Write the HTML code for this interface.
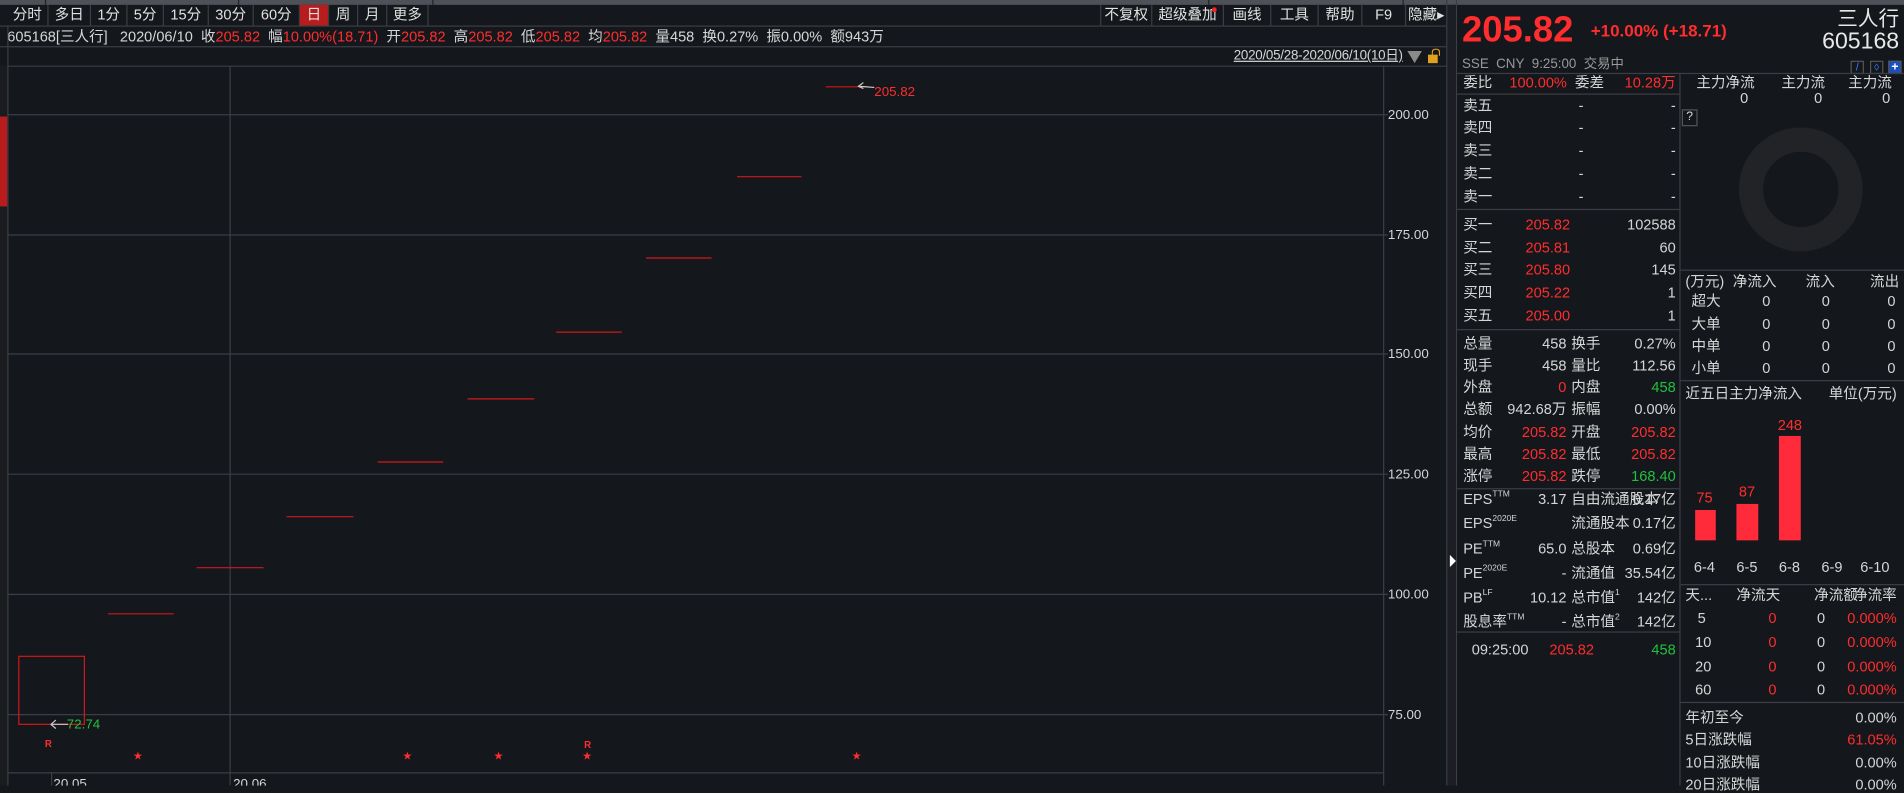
<!DOCTYPE html>
<html><head><meta charset="utf-8"><style>
html,body{margin:0;padding:0;background:#14171c;overflow:hidden;width:1904px;height:786px}
#w{position:absolute;left:0;top:0;width:1568px;height:647px;transform:scale(1.214286);transform-origin:0 0;background:#14171c;font-family:"Liberation Sans","Noto Sans CJK SC",sans-serif;font-size:12px;color:#d6d6d6}
.t{position:absolute;white-space:nowrap;line-height:14px}
.r{color:#ff2d2d}.g{color:#22c040}.gr{color:#9a9a9a}
.hl{position:absolute;height:1px;background:#3b3e44}
.vl{position:absolute;width:1px;background:#3b3e44}
.btn{position:absolute;top:4px;height:17px;line-height:17px;text-align:center;border-right:1px solid #3b3e44;font-size:12px;color:#e0e0e0}
sup{font-size:7px;vertical-align:top;line-height:8px}
</style></head><body><div id="w">
<div style="position:absolute;left:0;top:0;width:1568px;height:4px;background:#4e5157"></div>
<div style="position:absolute;left:37px;top:0;width:1px;height:4px;background:#222"></div>
<div style="position:absolute;left:196px;top:0;width:1px;height:4px;background:#222"></div>
<div style="position:absolute;left:356px;top:0;width:1px;height:4px;background:#222"></div>
<div style="position:absolute;left:995px;top:0;width:1px;height:4px;background:#222"></div>
<div style="position:absolute;left:1155px;top:0;width:1px;height:4px;background:#222"></div>
<div class="btn" style="left:6px;width:33px">分时</div>
<div class="btn" style="left:40px;width:34px">多日</div>
<div class="btn" style="left:75px;width:29px">1分</div>
<div class="btn" style="left:105px;width:29px">5分</div>
<div class="btn" style="left:135px;width:36px">15分</div>
<div class="btn" style="left:172px;width:36px">30分</div>
<div class="btn" style="left:209px;width:37px">60分</div>
<div class="btn" style="left:247px;width:23px;background:#b81c1c">日</div>
<div class="btn" style="left:271px;width:23px">周</div>
<div class="btn" style="left:295px;width:23px">月</div>
<div class="btn" style="left:319px;width:33px">更多</div>
<div class="vl" style="left:906px;top:4px;height:17px"></div>
<div class="btn" style="left:907px;width:41px">不复权</div>
<div class="btn" style="left:949px;width:58px">超级叠加</div>
<div style="position:absolute;left:998px;top:6px;width:4px;height:4px;border-radius:2px;background:#f22"></div>
<div class="btn" style="left:1008px;width:38px">画线</div>
<div class="btn" style="left:1047px;width:38px">工具</div>
<div class="btn" style="left:1086px;width:35px">帮助</div>
<div class="btn" style="left:1122px;width:35px">F9</div>
<div class="btn" style="left:1158px;width:33px;border:none">隐藏▸</div>
<div class="hl" style="left:0;top:21px;width:1191px"></div>
<div class="t" style="left:6px;top:23px">605168[三人行]&nbsp;&nbsp; 2020/06/10&nbsp; 收<span class="r">205.82</span>&nbsp; 幅<span class="r">10.00%(18.71)</span>&nbsp; 开<span class="r">205.82</span>&nbsp; 高<span class="r">205.82</span>&nbsp; 低<span class="r">205.82</span>&nbsp; 均<span class="r">205.82</span>&nbsp; 量458&nbsp; 换0.27%&nbsp; 振0.00%&nbsp; 额943万</div>
<div class="hl" style="left:0;top:38px;width:1191px"></div>
<div class="t" style="left:1016px;top:39px;text-decoration:underline;font-size:11px;letter-spacing:-0.2px">2020/05/28-2020/06/10(10日)</div>
<div style="position:absolute;left:1159px;top:42px;width:0;height:0;border-left:6px solid transparent;border-right:6px solid transparent;border-top:10px solid #8a8a8a"></div>
<div style="position:absolute;left:1176px;top:45px;width:8px;height:7px;background:#e0a020"></div>
<div style="position:absolute;left:1179px;top:40px;width:5px;height:5px;border:1px solid #e0a020;border-bottom:none;border-radius:3px 3px 0 0"></div>
<div style="position:absolute;left:0;top:54px;width:6px;height:593px;background:#1a1c20"></div>
<div style="position:absolute;left:0;top:96px;width:6px;height:74px;background:#b81c1c"></div>
<div class="vl" style="left:6px;top:21px;height:626px"></div>
<svg style="position:absolute;left:0;top:0" width="1200" height="647">
<g stroke="#3b3e44" stroke-width="1">
<line x1="7" y1="54.5" x2="1191" y2="54.5"/>
<line x1="7" y1="94.5" x2="1143" y2="94.5"/>
<line x1="7" y1="193.5" x2="1143" y2="193.5"/>
<line x1="7" y1="291.5" x2="1143" y2="291.5"/>
<line x1="7" y1="390.5" x2="1143" y2="390.5"/>
<line x1="7" y1="489.5" x2="1143" y2="489.5"/>
<line x1="7" y1="588.5" x2="1143" y2="588.5"/>
<line x1="7" y1="636.5" x2="1139" y2="636.5"/>
<line x1="189.5" y1="54" x2="189.5" y2="647"/>
<line x1="42.5" y1="636" x2="42.5" y2="647"/>
<line x1="1139.5" y1="54" x2="1139.5" y2="647"/>
<line x1="1191.5" y1="0" x2="1191.5" y2="647"/>
<line x1="1199.5" y1="0" x2="1199.5" y2="647"/>
</g>
<rect x="1192" y="4" width="7" height="643" fill="#1c1e23"/>
<polygon points="1194,457 1194,467 1199,462" fill="#fff"/>
<g stroke="#d01818" stroke-width="1">
<line x1="680" y1="71.5" x2="715" y2="71.5"/>
<line x1="607" y1="145.5" x2="660" y2="145.5"/>
<line x1="532" y1="212.5" x2="586" y2="212.5"/>
<line x1="458" y1="273.5" x2="512" y2="273.5"/>
<line x1="385" y1="328.5" x2="440" y2="328.5"/>
<line x1="311" y1="380.5" x2="365" y2="380.5"/>
<line x1="236" y1="425.5" x2="291" y2="425.5"/>
<line x1="162" y1="467.5" x2="217" y2="467.5"/>
<line x1="89" y1="505.5" x2="143" y2="505.5"/>
<rect x="15.5" y="540.5" width="54" height="56" fill="none"/>
</g>
<g stroke="#ccc" stroke-width="1" fill="none">
<line x1="707" y1="71" x2="720" y2="72"/><polyline points="711,68 707,71 711,73"/>
<line x1="42" y1="596.5" x2="56" y2="596.5"/><polyline points="46,593 42,596.5 46,600"/>
</g>
<text x="720" y="79" fill="#ff2d2d" font-size="11" font-family="Liberation Sans">205.82</text>
<text x="55" y="600" fill="#22c040" font-size="11" font-family="Liberation Sans">72.74</text>
<g fill="#ff2d2d" font-size="8" font-family="Liberation Sans" font-weight="bold">
<text x="37" y="615">R</text><text x="481" y="616">R</text>
<text x="110" y="625">★</text><text x="332" y="625">★</text><text x="407" y="625">★</text><text x="480" y="625">★</text><text x="702" y="625">★</text>
</g>
<g fill="#d6d6d6" font-size="11" font-family="Liberation Sans">
<text x="1143" y="98">200.00</text><text x="1143" y="197">175.00</text><text x="1143" y="295">150.00</text>
<text x="1143" y="394">125.00</text><text x="1143" y="493">100.00</text><text x="1143" y="592">75.00</text>
<text x="44" y="649">20.05</text><text x="192" y="649">20.06</text>
</g>
</svg>
<div class="t r" style="left:1204px;top:9px;font-size:30px;line-height:32px;font-weight:bold">205.82</div>
<div class="t r" style="left:1310px;top:18px;font-size:14px;font-weight:bold">+10.00% (+18.71)</div>
<div class="t" style="right:4px;top:6px;font-size:17px;line-height:20px;color:#e8e8e8">三人行</div>
<div class="t" style="right:4px;top:24px;font-size:19px;line-height:22px;color:#e8e8e8">605168</div>
<div class="t gr" style="left:1204px;top:46px;font-size:11px">SSE&nbsp; CNY&nbsp; 9:25:00&nbsp; 交易中</div>
<div style="position:absolute;left:1524px;top:50px;width:9px;height:9px;border:1px solid #555;color:#3a7fff;font-size:9px;line-height:9px;text-align:center">/</div>
<div style="position:absolute;left:1540px;top:50px;width:9px;height:9px;border:1px solid #555;color:#3a7fff;font-size:8px;line-height:9px;text-align:center">◊</div>
<div style="position:absolute;left:1555px;top:50px;width:9px;height:9px;border:1px solid #555;background:#1b4fc0;color:#fff;font-size:10px;line-height:9px;text-align:center;font-weight:bold">+</div>
<div class="hl" style="left:1200px;top:60px;width:368px"></div>
<div class="vl" style="left:1383px;top:60px;height:587px"></div>
<div class="t" style="left:1205px;top:61px">委比</div><div class="t r" style="left:1243px;top:61px">100.00%</div><div class="t" style="left:1297px;top:61px">委差</div><div class="t r" style="right:188px;top:61px">10.28万</div>
<div class="hl" style="left:1200px;top:77px;width:183px"></div>
<div class="t" style="left:1205px;top:80px">卖五</div><div class="t" style="left:1300px;top:80px">-</div><div class="t" style="left:1376px;top:80px">-</div>
<div class="t" style="left:1205px;top:98px">卖四</div><div class="t" style="left:1300px;top:98px">-</div><div class="t" style="left:1376px;top:98px">-</div>
<div class="t" style="left:1205px;top:117px">卖三</div><div class="t" style="left:1300px;top:117px">-</div><div class="t" style="left:1376px;top:117px">-</div>
<div class="t" style="left:1205px;top:136px">卖二</div><div class="t" style="left:1300px;top:136px">-</div><div class="t" style="left:1376px;top:136px">-</div>
<div class="t" style="left:1205px;top:155px">卖一</div><div class="t" style="left:1300px;top:155px">-</div><div class="t" style="left:1376px;top:155px">-</div>
<div class="hl" style="left:1200px;top:172px;width:183px"></div>
<div class="t" style="left:1205px;top:178px">买一</div><div class="t r" style="right:275px;top:178px">205.82</div><div class="t" style="right:188px;top:178px">102588</div>
<div class="t" style="left:1205px;top:197px">买二</div><div class="t r" style="right:275px;top:197px">205.81</div><div class="t" style="right:188px;top:197px">60</div>
<div class="t" style="left:1205px;top:215px">买三</div><div class="t r" style="right:275px;top:215px">205.80</div><div class="t" style="right:188px;top:215px">145</div>
<div class="t" style="left:1205px;top:234px">买四</div><div class="t r" style="right:275px;top:234px">205.22</div><div class="t" style="right:188px;top:234px">1</div>
<div class="t" style="left:1205px;top:253px">买五</div><div class="t r" style="right:275px;top:253px">205.00</div><div class="t" style="right:188px;top:253px">1</div>
<div class="hl" style="left:1200px;top:271px;width:183px"></div>
<div class="t" style="left:1205px;top:276px">总量</div><div class="t" style="right:278px;top:276px">458</div><div class="t" style="left:1294px;top:276px">换手</div><div class="t" style="right:188px;top:276px">0.27%</div>
<div class="t" style="left:1205px;top:294px">现手</div><div class="t" style="right:278px;top:294px">458</div><div class="t" style="left:1294px;top:294px">量比</div><div class="t" style="right:188px;top:294px">112.56</div>
<div class="t" style="left:1205px;top:312px">外盘</div><div class="t r" style="right:278px;top:312px">0</div><div class="t" style="left:1294px;top:312px">内盘</div><div class="t g" style="right:188px;top:312px">458</div>
<div class="t" style="left:1205px;top:330px">总额</div><div class="t" style="right:278px;top:330px">942.68万</div><div class="t" style="left:1294px;top:330px">振幅</div><div class="t" style="right:188px;top:330px">0.00%</div>
<div class="t" style="left:1205px;top:349px">均价</div><div class="t r" style="right:278px;top:349px">205.82</div><div class="t" style="left:1294px;top:349px">开盘</div><div class="t r" style="right:188px;top:349px">205.82</div>
<div class="t" style="left:1205px;top:367px">最高</div><div class="t r" style="right:278px;top:367px">205.82</div><div class="t" style="left:1294px;top:367px">最低</div><div class="t r" style="right:188px;top:367px">205.82</div>
<div class="t" style="left:1205px;top:385px">涨停</div><div class="t r" style="right:278px;top:385px">205.82</div><div class="t" style="left:1294px;top:385px">跌停</div><div class="t g" style="right:188px;top:385px">168.40</div>
<div class="hl" style="left:1200px;top:402px;width:183px"></div>
<div class="t" style="left:1205px;top:404px">EPS<sup>TTM</sup></div><div class="t" style="right:278px;top:404px">3.17</div><div class="t" style="left:1294px;top:404px">自由流通股本</div><div class="t" style="right:188px;top:404px">0.17亿</div>
<div class="t" style="left:1205px;top:424px">EPS<sup>2020E</sup></div><div class="t" style="left:1294px;top:424px">流通股本</div><div class="t" style="right:188px;top:424px">0.17亿</div>
<div class="t" style="left:1205px;top:445px">PE<sup>TTM</sup></div><div class="t" style="right:278px;top:445px">65.0</div><div class="t" style="left:1294px;top:445px">总股本</div><div class="t" style="right:188px;top:445px">0.69亿</div>
<div class="t" style="left:1205px;top:465px">PE<sup>2020E</sup></div><div class="t" style="right:278px;top:465px">-</div><div class="t" style="left:1294px;top:465px">流通值</div><div class="t" style="right:188px;top:465px">35.54亿</div>
<div class="t" style="left:1205px;top:485px">PB<sup>LF</sup></div><div class="t" style="right:278px;top:485px">10.12</div><div class="t" style="left:1294px;top:485px">总市值<sup>1</sup></div><div class="t" style="right:188px;top:485px">142亿</div>
<div class="t" style="left:1205px;top:505px">股息率<sup>TTM</sup></div><div class="t" style="right:278px;top:505px">-</div><div class="t" style="left:1294px;top:505px">总市值<sup>2</sup></div><div class="t" style="right:188px;top:505px">142亿</div>
<div class="hl" style="left:1200px;top:520px;width:183px"></div>
<div class="t" style="left:1212px;top:528px">09:25:00</div><div class="t r" style="left:1276px;top:528px">205.82</div><div class="t g" style="right:188px;top:528px">458</div>
<div class="t" style="left:1397px;top:61px">主力净流</div><div class="t" style="left:1467px;top:61px">主力流</div><div class="t" style="left:1522px;top:61px">主力流</div>
<div class="t" style="left:1433px;top:74px">0</div><div class="t" style="left:1494px;top:74px">0</div><div class="t" style="left:1550px;top:74px">0</div>
<div style="position:absolute;left:1385px;top:90px;width:11px;height:12px;border:1px solid #555;font-size:10px;line-height:12px;text-align:center">?</div>
<div style="position:absolute;left:1432px;top:105px;width:62px;height:62px;border-radius:50%;border:20px solid #222327"></div>
<div class="hl" style="left:1384px;top:222px;width:184px"></div>
<div class="t" style="left:1388px;top:225px">(万元)</div><div class="t" style="left:1427px;top:225px">净流入</div><div class="t" style="left:1487px;top:225px">流入</div><div class="t" style="left:1540px;top:225px">流出</div>
<div class="t" style="left:1393px;top:241px">超大</div><div class="t" style="right:110px;top:241px">0</div><div class="t" style="right:61px;top:241px">0</div><div class="t" style="right:7px;top:241px">0</div>
<div class="t" style="left:1393px;top:260px">大单</div><div class="t" style="right:110px;top:260px">0</div><div class="t" style="right:61px;top:260px">0</div><div class="t" style="right:7px;top:260px">0</div>
<div class="t" style="left:1393px;top:278px">中单</div><div class="t" style="right:110px;top:278px">0</div><div class="t" style="right:61px;top:278px">0</div><div class="t" style="right:7px;top:278px">0</div>
<div class="t" style="left:1393px;top:296px">小单</div><div class="t" style="right:110px;top:296px">0</div><div class="t" style="right:61px;top:296px">0</div><div class="t" style="right:7px;top:296px">0</div>
<div class="hl" style="left:1384px;top:313px;width:184px"></div>
<div class="t" style="left:1388px;top:317px">近五日主力净流入</div><div class="t" style="right:6px;top:317px">单位(万元)</div>
<div style="position:absolute;left:1396px;top:420px;width:17px;height:25px;background:#ff2a3a"></div>
<div style="position:absolute;left:1430px;top:415px;width:18px;height:30px;background:#ff2a3a"></div>
<div style="position:absolute;left:1465px;top:359px;width:18px;height:86px;background:#ff2a3a"></div>
<div class="t r" style="left:1397px;top:403px">75</div><div class="t r" style="left:1432px;top:398px">87</div><div class="t r" style="left:1464px;top:343px">248</div>
<div class="t" style="left:1395px;top:460px">6-4</div><div class="t" style="left:1430px;top:460px">6-5</div><div class="t" style="left:1465px;top:460px">6-8</div><div class="t" style="left:1500px;top:460px">6-9</div><div class="t" style="left:1532px;top:460px">6-10</div>
<div class="hl" style="left:1384px;top:481px;width:184px"></div>
<div class="t" style="left:1388px;top:483px">天...</div><div class="t" style="left:1430px;top:483px">净流天</div><div class="t" style="left:1494px;top:483px">净流额</div><div class="t" style="left:1526px;top:483px">净流率</div>
<div class="t" style="left:1398px;top:502px">5</div><div class="t r" style="right:105px;top:502px">0</div><div class="t" style="right:65px;top:502px">0</div><div class="t r" style="right:6px;top:502px">0.000%</div>
<div class="t" style="left:1396px;top:522px">10</div><div class="t r" style="right:105px;top:522px">0</div><div class="t" style="right:65px;top:522px">0</div><div class="t r" style="right:6px;top:522px">0.000%</div>
<div class="t" style="left:1396px;top:542px">20</div><div class="t r" style="right:105px;top:542px">0</div><div class="t" style="right:65px;top:542px">0</div><div class="t r" style="right:6px;top:542px">0.000%</div>
<div class="t" style="left:1396px;top:561px">60</div><div class="t r" style="right:105px;top:561px">0</div><div class="t" style="right:65px;top:561px">0</div><div class="t r" style="right:6px;top:561px">0.000%</div>
<div class="hl" style="left:1384px;top:578px;width:184px"></div>
<div class="t" style="left:1388px;top:584px">年初至今</div><div class="t" style="right:6px;top:584px">0.00%</div>
<div class="t" style="left:1388px;top:602px">5日涨跌幅</div><div class="t r" style="right:6px;top:602px">61.05%</div>
<div class="t" style="left:1388px;top:621px">10日涨跌幅</div><div class="t" style="right:6px;top:621px">0.00%</div>
<div class="t" style="left:1388px;top:639px">20日涨跌幅</div><div class="t" style="right:6px;top:639px">0.00%</div>
</div></body></html>
